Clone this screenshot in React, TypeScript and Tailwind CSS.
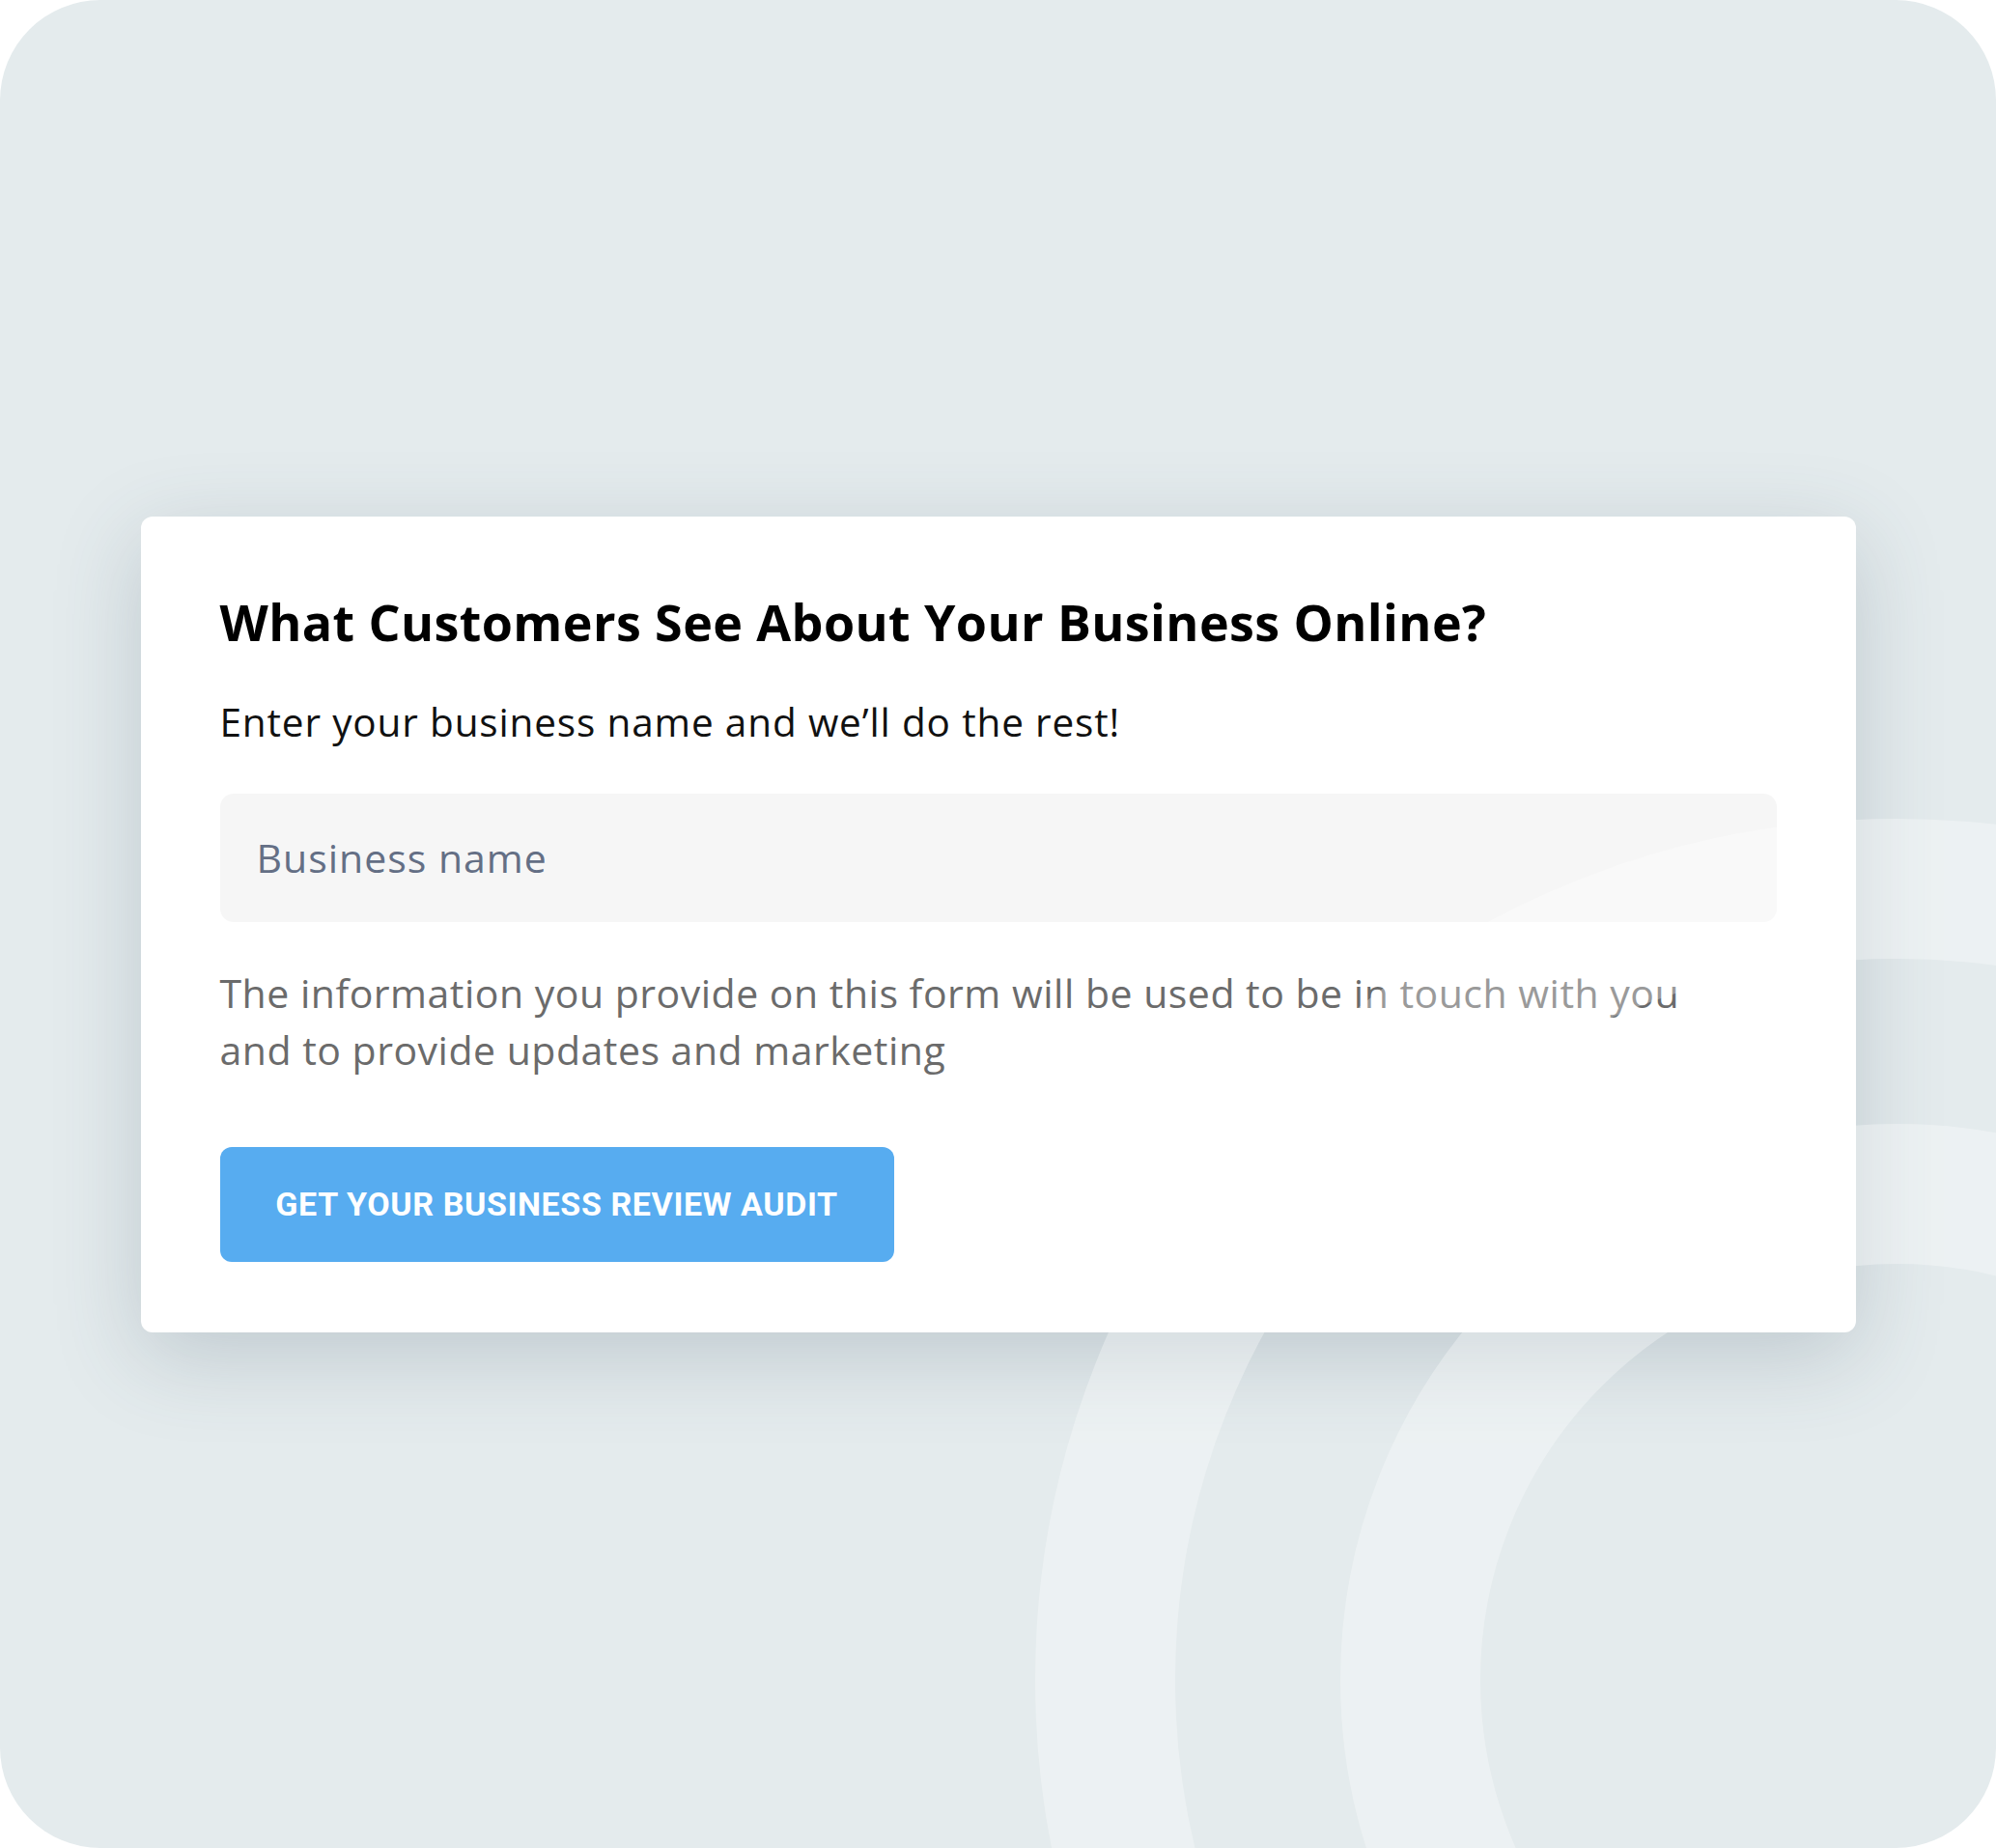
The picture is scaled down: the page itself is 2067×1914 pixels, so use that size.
import { useState } from 'react';

export default function App() {
  const [name, setName] = useState('');

  return (
    <div className="w-[2067px] h-[1914px] bg-white">
      <div className="relative w-full h-full rounded-[104px] overflow-hidden bg-[#e4ebed] flex items-center justify-center">
        <div className="w-[1776px] bg-white rounded-[12px] shadow-[0_24px_90px_rgba(60,80,100,0.22)] px-[82px] pt-[79px] pb-[73px] font-['Open_Sans',sans-serif]">
          <h1 className="text-[52px] leading-[60px] font-bold text-black tracking-[0.4px]">
            What Customers See About Your Business Online?
          </h1>
          <p className="mt-[50px] text-[40.5px] leading-[48px] text-[#111] tracking-[0.85px]">
            Enter your business name and we’ll do the rest!
          </p>
          <input
            value={name}
            onChange={(e) => setName(e.target.value)}
            placeholder="Business name"
            className="mt-[50px] block w-full h-[133px] rounded-[14px] bg-[#f6f6f6] px-[38px] text-[41px] tracking-[1px] text-[#111] placeholder:text-[#646f85] outline-none"
          />
          <p className="mt-[44px] text-[41px] leading-[59px] text-[#6b6b6b] tracking-[0.5px]">
            The information you provide on this form will be used to be in touch with you
            <br />
            and to provide updates and marketing
          </p>
          <button className="mt-[71px] w-[698px] h-[119px] rounded-[12px] bg-[#57acf0] text-white text-[34px] font-bold font-['Roboto',sans-serif] tracking-[0.6px]">
            GET YOUR BUSINESS REVIEW AUDIT
          </button>
        </div>

        {/* decorative rings drawn over everything, white at low alpha */}
        <svg
          className="absolute inset-0 pointer-events-none"
          width="2067"
          height="1914"
          viewBox="0 0 2067 1914"
        >
          <circle cx="1964" cy="1740" r="819.5" fill="none" stroke="#ffffff" strokeWidth="145" opacity="0.32" />
          <circle cx="1964" cy="1740" r="503.5" fill="none" stroke="#ffffff" strokeWidth="145" opacity="0.32" />
        </svg>
      </div>
    </div>
  );
}
